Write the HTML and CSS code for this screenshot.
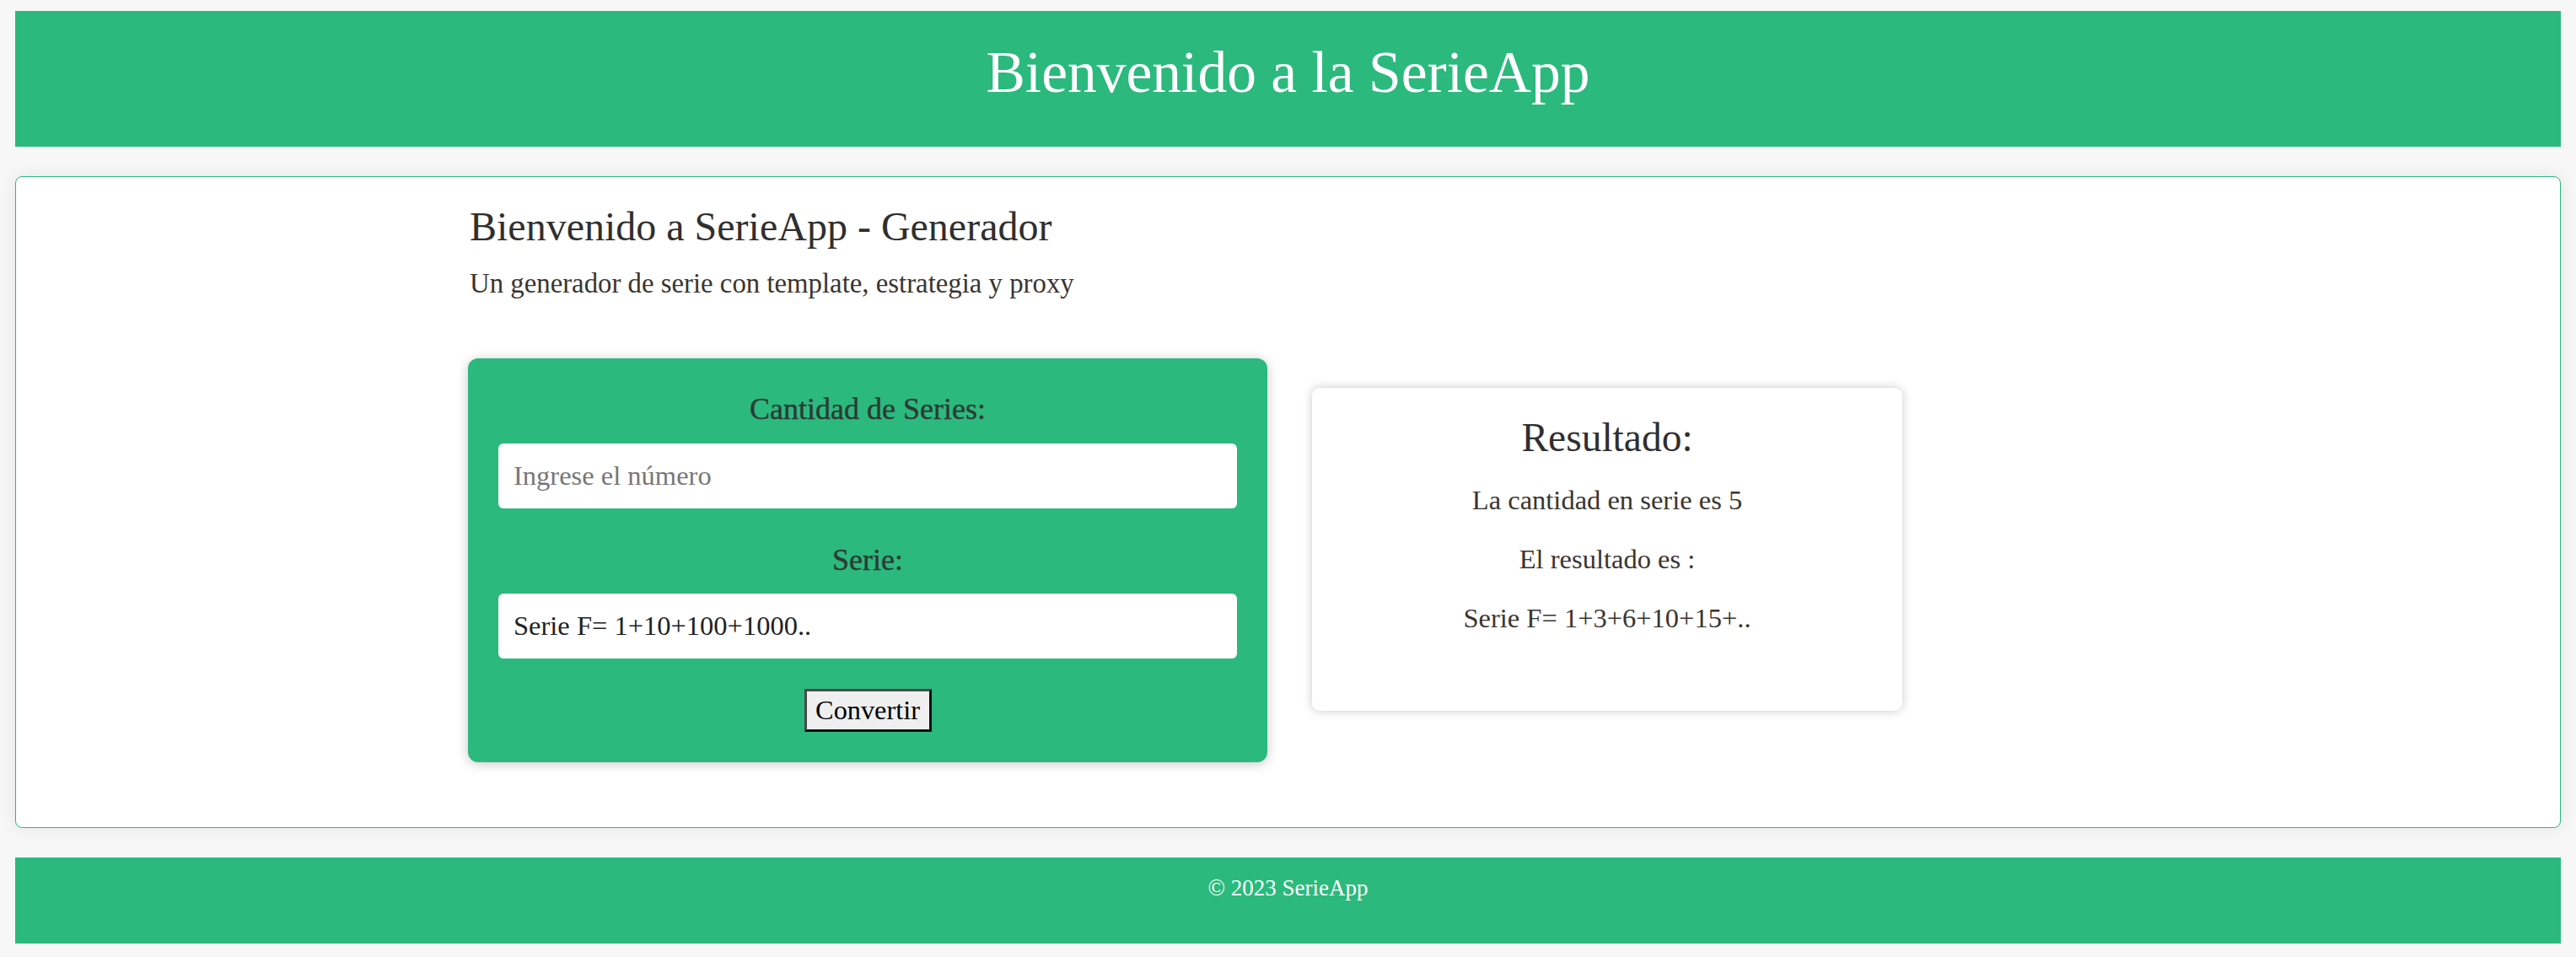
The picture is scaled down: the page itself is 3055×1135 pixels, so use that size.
FILE: index.html
```html
<!DOCTYPE html>
<html lang="es">
<head>
<meta charset="utf-8">
<title>SerieApp</title>
<link rel="stylesheet" href="styles.css">
</head>
<body>
<header class="site-header">
  <h1 class="site-title">Bienvenido a la SerieApp</h1>
</header>
<main class="main-box">
  <div class="container">
    <h2 class="page-title">Bienvenido a SerieApp - Generador</h2>
    <p class="subtitle">Un generador de serie con template, estrategia y proxy</p>
    <div class="row">
      <form class="form-card">
        <label class="field-label" for="cantidad">Cantidad de Series:</label>
        <input class="field-input" id="cantidad" type="text" placeholder="Ingrese el número">
        <label class="field-label field-label-second" for="serie">Serie:</label>
        <input class="field-input" id="serie" type="text" value="Serie F= 1+10+100+1000..">
        <div class="btn-wrap"><button class="btn" type="button">Convertir</button></div>
      </form>
      <section class="result-card">
        <h3 class="result-title">Resultado:</h3>
        <p class="result-line result-first">La cantidad en serie es 5</p>
        <p class="result-line">El resultado es :</p>
        <p class="result-line">Serie F= 1+3+6+10+15+..</p>
      </section>
    </div>
  </div>
</main>
<footer class="site-footer">
  <p class="footer-text">© 2023 SerieApp</p>
</footer>
</body>
</html>
```
FILE: styles.css
```css
* { box-sizing: border-box; }
html, body { margin: 0; }
body {
  padding: 13px 18px 16px;
  background: #f7f7f7;
  font-family: "Liberation Serif", "Times New Roman", serif;
  color: #333;
}
.site-header {
  background: #2bb97d;
  padding: 34px 0 49px;
  text-align: center;
}
.site-title {
  margin: 0;
  font-size: 69.5px;
  line-height: 78px;
  font-weight: normal;
  color: #fff;
}
.main-box {
  display: block;
  margin-top: 35px;
  background: #fff;
  border: 1px solid #2bb97d;
  border-radius: 8px;
  box-shadow: 0 0 20px rgba(0, 0, 0, 0.08);
  padding: 32px 0 77px;
}
.container {
  max-width: 1945px;
  margin: 0 auto;
}
.page-title {
  margin: 0 0 0 2px;
  font-size: 48px;
  line-height: 54px;
  font-weight: normal;
  color: #2f2f2f;
}
.subtitle {
  margin: 20px 0 0 2px;
  font-size: 32.8px;
  line-height: 40px;
  color: #3a3530;
}
.row {
  display: flex;
  align-items: flex-start;
  gap: 53px;
  margin-top: 69px;
}
.form-card {
  width: 948px;
  background: #2bb97d;
  border-radius: 12px;
  box-shadow: 0 2px 14px rgba(0, 0, 0, 0.22);
  padding: 38px 36px 36px;
}
.field-label {
  display: block;
  text-align: center;
  font-size: 36px;
  line-height: 44px;
  color: #2c3a33;
  -webkit-text-stroke: 0.4px #2c3a33;
}
.field-label-second { margin-top: 39px; }
.field-input {
  display: block;
  width: 100%;
  height: 77px;
  margin-top: 19px;
  border: none;
  border-radius: 6px;
  background: #fff;
  padding: 0 18px;
  font-family: "Liberation Serif", "Times New Roman", serif;
  font-size: 32.5px;
  color: #222;
  outline: none;
}
.field-label-second + .field-input { margin-top: 18px; }
.field-input::placeholder { color: #777; }
.btn-wrap {
  margin-top: 36px;
  text-align: center;
}
.btn {
  width: 151px;
  height: 51px;
  padding: 0;
  background: #efefef;
  border-style: solid;
  border-width: 3px;
  border-color: #4a4a4a #111 #111 #4a4a4a;
  border-radius: 0;
  font-family: "Liberation Serif", "Times New Roman", serif;
  font-size: 32.3px;
  line-height: 45px;
  color: #000;
}
.result-card {
  width: 700px;
  margin-top: 35px;
  background: #fff;
  border-radius: 9px;
  box-shadow: 0 0 12px rgba(0, 0, 0, 0.22);
  padding: 32px 20px 90px;
  text-align: center;
}
.result-title {
  margin: 0;
  font-size: 47.5px;
  line-height: 54px;
  font-weight: normal;
  color: #2f2f2f;
}
.result-line {
  margin: 30px 0 0;
  font-size: 32.5px;
  line-height: 40px;
  color: #3a3530;
}
.result-first { margin-top: 27px; }
.site-footer {
  margin-top: 35px;
  background: #2bb97d;
  padding: 20px 0 50px;
  text-align: center;
}
.footer-text {
  margin: 0;
  font-size: 27px;
  line-height: 32px;
  color: #fff;
}
```
